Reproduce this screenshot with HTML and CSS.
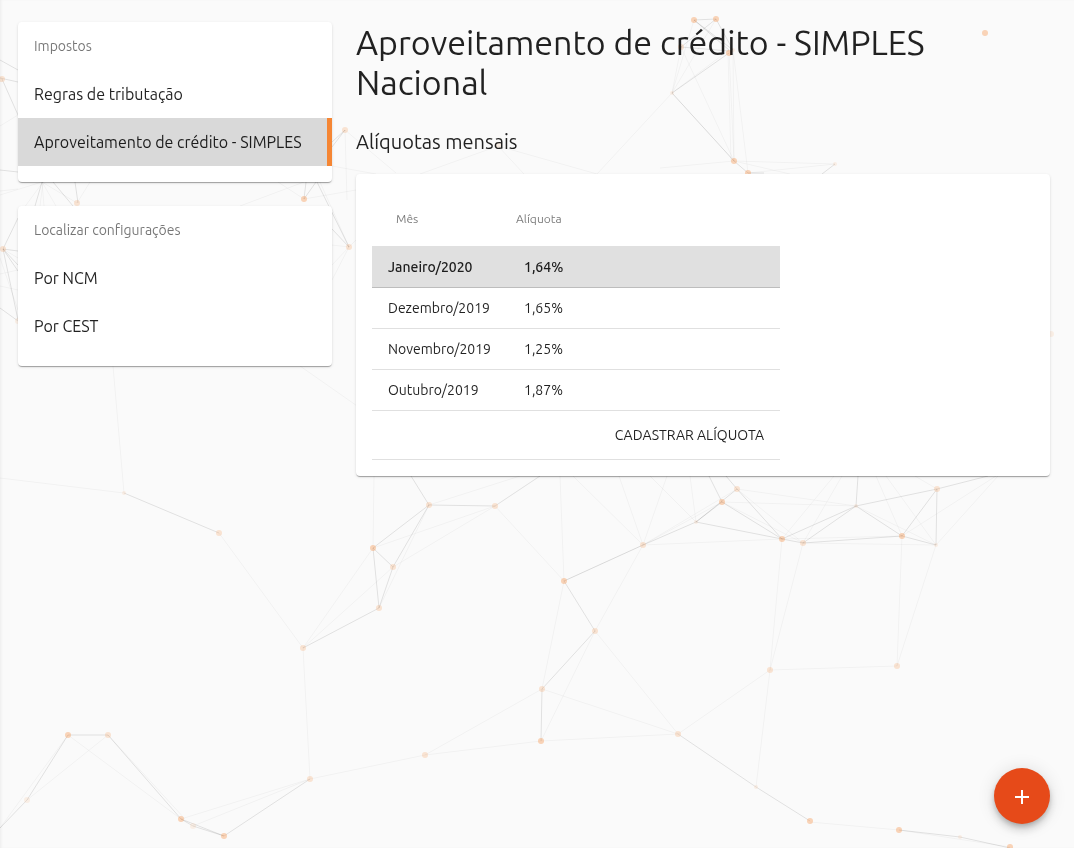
FILE: index.html
```html
<!DOCTYPE html>
<html lang="pt-BR">
<head>
<meta charset="utf-8">
<meta name="viewport" content="width=device-width, initial-scale=1">
<title>Aproveitamento de crédito - SIMPLES Nacional</title>
<link rel="stylesheet" href="styles.css">
</head>
<body>
<svg class="network" aria-hidden="true">
  <g class="links faint">
    <path d="M694 20L672 93M716 19L672 93M681 47L672 93M729 50L672 93M681 47L734 161M729 50L734 161M733 50L734 161M733 50L748 173M728 53L731 161M672 93L597 174M734 161L660 168M672 93L734 161M498 146L597 174M498 146L420 174M498 146L524 174M734 161L835 164M748 173L835 164M734 161L790 174"/>
    <path d="M303 648L373 548M303 648L393 567M373 548L495 506M393 567L495 506M429 505L379 608M374 476L373 548M429 505L520 476M495 506L564 581M560 476L564 581M564 581L542 689M564 581L643 545M643 545L595 631M643 545L573 476M643 545L619 476M643 545L667 476M595 631L541 741M595 631L678 734M542 689L425 755M542 689L678 734M541 741L678 734M425 755L541 741M310 779L425 755M303 648L310 779M219 533L303 648"/>
    <path d="M643 545L722 502M643 545L737 489M643 545L782 539M722 502L803 543M737 489L803 543M722 502L856 506M737 489L856 506M782 539L834 476M803 543L842 476M782 539L902 536M803 543L936 545M856 506L936 545M876 476L902 536M902 536L996 476M936 545L998 476M886 476L936 545M782 539L770 670M803 543L770 670M902 536L897 666M936 545L897 666M770 670L897 666M770 670L678 734M770 670L756 787M899 830L1010 847M650 476L696 522M690 476L696 522M915 476L937 489M810 822L899 830"/>
    <path d="M113 366L124 493M0 478L124 493M68 735L0 828M108 735L27 800M68 735L181 819M108 735L185 819M193 826L310 779M181 819L310 779M300 366L360 408"/>
    <path d="M0 126L18 115M0 191L18 189M0 258L18 310M0 274L18 270M42 182L0 195M43 182L40 206M42 182L44 206M42 182L56 206M43 182L18 216M77 203L42 182M77 203L90 182M345 130L396 173M345 130L347 200M304 199L356 190M304 199L278 182M240 206L304 182M349 247L320 182M332 166L376 174M349 247L356 240M349 247L332 245M349 247L332 265M349 247L332 280M3 249L18 258M0 286L18 290"/>
  </g>
  <g class="links">
    <path d="M694 20L716 19M694 20L729 50M716 19L733 50M681 47L729 51M694 20L733 50M716 19L681 47M729 53L672 93M672 93L734 161M734 161L748 173M748 173L764 173M835 164L822 174"/>
    <path d="M429 505L495 506M429 505L411 476M495 506L540 476M429 505L373 548M429 505L393 567M373 548L393 567L379 608L373 548M379 608L303 648M564 581L643 545M564 581L595 631L542 689L541 741M643 545L696 522"/>
    <path d="M696 522L737 489L782 539M722 502L696 522L782 539L803 543M722 502L782 539M722 502L709 476M737 489L726 476M856 506L782 539M803 543L856 506L902 536L937 489L936 545L902 536M803 543L902 536M856 506L858 476M856 506L937 489L988 476M678 734L756 787L810 821M899 830L960 837L1010 848"/>
    <path d="M124 493L219 533M0 828L27 800L68 735L108 735L181 819L193 826L224 836L310 779M181 819L224 836"/>
    <path d="M0 60L18 70M0 78L18 82M2 79L18 115M0 170L18 172M3 249L18 218M3 249L18 251M3 249L18 265M3 249L18 271M3 249L18 320M0 308L18 321M42 182L35 206M53 182L73 206M75 182L78 203M345 130L332 142M345 130L332 147M304 199L306 182M304 199L316 182M317 182L349 247M332 229L349 247"/>
  </g>
  <g class="dots">
    <circle cx="694" cy="20" r="3"/><circle cx="716" cy="19" r="3"/><circle cx="729" cy="53" r="3"/><circle cx="985" cy="33" r="3"/><circle cx="734" cy="161" r="3"/><circle cx="748" cy="173" r="3"/><circle cx="304" cy="199" r="3"/><circle cx="373" cy="548" r="3"/><circle cx="564" cy="581" r="3"/><circle cx="541" cy="741" r="3"/><circle cx="722" cy="502" r="3"/><circle cx="782" cy="539" r="3"/><circle cx="902" cy="536" r="3"/><circle cx="810" cy="821" r="3"/><circle cx="899" cy="830" r="3"/><circle cx="1010" cy="847" r="3"/><circle cx="68" cy="735" r="3"/><circle cx="181" cy="819" r="3"/><circle cx="224" cy="836" r="3"/>
  </g>
  <g class="dots soft">
    <circle cx="681" cy="47" r="3"/><circle cx="345" cy="130" r="3"/><circle cx="349" cy="247" r="3"/><circle cx="2" cy="79" r="3"/><circle cx="3" cy="249" r="3"/><circle cx="77" cy="203" r="3"/><circle cx="429" cy="505" r="3"/><circle cx="495" cy="506" r="3"/><circle cx="393" cy="567" r="3"/><circle cx="379" cy="608" r="3"/><circle cx="303" cy="648" r="3"/><circle cx="310" cy="779" r="3"/><circle cx="425" cy="755" r="3"/><circle cx="542" cy="689" r="3"/><circle cx="595" cy="631" r="3"/><circle cx="643" cy="545" r="3"/><circle cx="678" cy="734" r="3"/><circle cx="737" cy="489" r="3"/><circle cx="803" cy="543" r="3"/><circle cx="937" cy="489" r="3"/><circle cx="770" cy="670" r="3"/><circle cx="897" cy="666" r="3"/><circle cx="219" cy="533" r="3"/><circle cx="108" cy="735" r="3"/>
  </g>
  <g class="dots pale">
    <circle cx="498" cy="145" r="3"/><circle cx="672" cy="93" r="2"/><circle cx="733" cy="50" r="2"/><circle cx="835" cy="164" r="2"/><circle cx="696" cy="522" r="2"/><circle cx="856" cy="506" r="2"/><circle cx="936" cy="545" r="2"/><circle cx="756" cy="787" r="2"/><circle cx="960" cy="837" r="2"/><circle cx="124" cy="493" r="2"/><circle cx="27" cy="800" r="3"/><circle cx="193" cy="826" r="3"/><circle cx="18" cy="321" r="3"/><circle cx="1051" cy="334" r="3"/>
  </g>
</svg>
<div class="layout">
  <aside class="sidebar">
    <nav class="card menu" aria-labelledby="menu-impostos">
      <h2 class="menu-title" id="menu-impostos">Impostos</h2>
      <a class="menu-item" href="#regras">Regras de tributação</a>
      <a class="menu-item active" href="#aproveitamento" aria-current="page">Aproveitamento de crédito - SIMPLES</a>
    </nav>
    <nav class="card menu" aria-labelledby="menu-localizar">
      <h2 class="menu-title" id="menu-localizar">Localizar configurações</h2>
      <a class="menu-item" href="#ncm">Por NCM</a>
      <a class="menu-item" href="#cest">Por CEST</a>
    </nav>
  </aside>
  <main class="content">
    <h1 class="page-title">Aproveitamento de crédito - SIMPLES Nacional</h1>
    <h2 class="section-title">Alíquotas mensais</h2>
    <section class="card panel">
      <table class="rates">
        <colgroup><col class="col-month"><col></colgroup>
        <thead>
          <tr><th class="head-month" scope="col">Mês</th><th class="head-rate" scope="col">Alíquota</th></tr>
        </thead>
        <tbody>
          <tr class="current"><td>Janeiro/2020</td><td>1,64%</td></tr>
          <tr><td>Dezembro/2019</td><td>1,65%</td></tr>
          <tr><td>Novembro/2019</td><td>1,25%</td></tr>
          <tr><td>Outubro/2019</td><td>1,87%</td></tr>
        </tbody>
        <tfoot>
          <tr><td class="actions" colspan="2"><button class="text-button" type="button">CADASTRAR ALÍQUOTA</button></td></tr>
        </tfoot>
      </table>
    </section>
  </main>
</div>
<button class="fab" type="button" aria-label="Adicionar">
  <svg width="24" height="24" viewBox="0 0 24 24" aria-hidden="true"><path fill="currentColor" d="M19 14h-6v6h-2v-6H5v-2h6V6h2v6h6z"/></svg>
</button>
</body>
</html>
```
FILE: styles.css
```css
* { box-sizing: border-box; }

body {
  margin: 0;
  min-height: 100vh;
  background: #fafafa;
  color: rgba(0, 0, 0, 0.87);
  font-family: Ubuntu, "Noto Sans", "Open Sans", sans-serif;
  font-size: 14px;
  box-shadow: inset 2px 0 3px -1px rgba(0, 0, 0, 0.06);
}

.network {
  position: fixed;
  inset: 0;
  z-index: -1;
  width: 100%;
  height: 100%;
}

.links {
  fill: none;
  stroke: #000;
  stroke-opacity: 0.1;
}

.links.faint { stroke-opacity: 0.035; }

.dots {
  fill: #f58634;
  fill-opacity: 0.34;
}

.dots.soft { fill-opacity: 0.2; }
.dots.pale { fill-opacity: 0.1; }

.layout {
  display: grid;
  grid-template-columns: 314px minmax(0, 1fr);
  gap: 24px;
  align-items: start;
  padding: 22px 24px 24px 18px;
}

.sidebar {
  display: flex;
  flex-direction: column;
  gap: 24px;
}

.card {
  background: #fff;
  border-radius: 4px;
  box-shadow: 0 2px 1px -1px rgba(0, 0, 0, 0.2), 0 1px 1px rgba(0, 0, 0, 0.14), 0 1px 3px rgba(0, 0, 0, 0.12);
}

.menu {
  display: flex;
  flex-direction: column;
  padding-bottom: 16px;
}

.menu-title,
.menu-item {
  margin: 0;
  padding: 0 16px;
  line-height: 48px;
  white-space: nowrap;
}

.menu-title {
  color: rgba(0, 0, 0, 0.54);
  font-size: 14px;
  font-weight: 400;
}

.menu-item {
  color: inherit;
  font-size: 16px;
  text-decoration: none;
}

.menu-item.active {
  background: #d9d9d9;
  border-right: 5px solid #f58634;
}

.page-title {
  margin: 0 0 24px;
  font-size: 34px;
  font-weight: 400;
  line-height: 40px;
}

.section-title {
  margin: 0 0 16px;
  font-size: 20px;
  font-weight: 400;
  line-height: 32px;
}

.panel { padding: 16px; }

.rates {
  width: 100%;
  max-width: 408px;
  table-layout: fixed;
  border-spacing: 0;
  font-size: 14px;
}

.col-month { width: 136px; }

.rates th {
  height: 56px;
  padding: 0 8px;
  color: rgba(0, 0, 0, 0.54);
  font-size: 12px;
  font-weight: 400;
  text-align: left;
}

.rates .head-month { padding-left: 24px; }

.rates td {
  height: 41px;
  padding: 0 16px;
  border-bottom: 1px solid #e0e0e0;
}

.rates .current td {
  height: 42px;
  background: #e0e0e0;
  border-bottom-color: #bdbdbd;
  font-weight: 500;
}

.rates .actions {
  height: 49px;
  text-align: right;
}

.text-button {
  padding: 0;
  border: 0;
  background: none;
  color: inherit;
  font: inherit;
  cursor: pointer;
}

.fab {
  position: fixed;
  right: 24px;
  bottom: 24px;
  display: grid;
  place-items: center;
  width: 56px;
  height: 56px;
  padding: 0;
  border: 0;
  border-radius: 50%;
  background: #e64a19;
  color: #fff;
  box-shadow: 0 3px 5px -1px rgba(0, 0, 0, 0.2), 0 6px 10px rgba(0, 0, 0, 0.14), 0 1px 18px rgba(0, 0, 0, 0.12);
  cursor: pointer;
}
```
